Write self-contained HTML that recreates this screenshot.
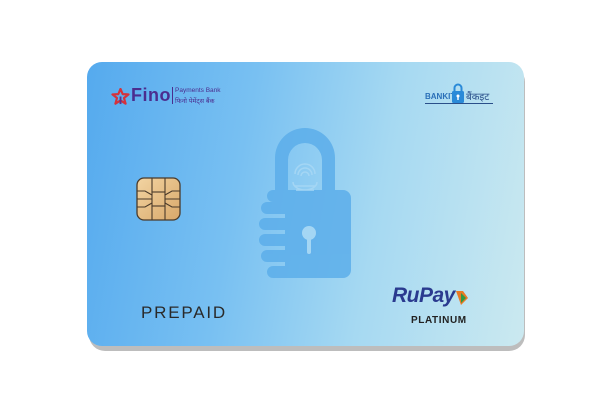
<!DOCTYPE html>
<html><head><style>
body{margin:0;width:612px;height:408px;background:#fff;position:relative;overflow:hidden;font-family:"Liberation Sans",sans-serif}
.sh{position:absolute;left:89px;top:66px;width:436px;height:285px;border-radius:16px;background:#bdbdbd}
.card{position:absolute;left:87px;top:62px;width:437px;height:284px;border-radius:15px;background:linear-gradient(100deg,#55aaee 0%,#78c0f2 35%,#a6d9f2 65%,#cbe9f0 100%)}
.t{position:absolute;white-space:nowrap}
</style></head><body>
<div class="sh"></div>
<div class="card"></div>
<svg class="t" style="left:111px;top:88px" width="19" height="17" viewBox="0 0 20 18"><path d="M10 1 L12.3 6.5 L18.5 6.8 L13.7 10.6 L15.4 16.6 L10 13.2 L4.6 16.6 L6.3 10.6 L1.5 6.8 L7.7 6.5Z" fill="none" stroke="#d4323c" stroke-width="2.3" stroke-linejoin="round"/><path d="M10 9 L10 17" stroke="#5a3290" stroke-width="2"/></svg>
<div class="t" style="left:131px;top:85px;font-size:18px;font-weight:bold;color:#4b2d8f;letter-spacing:0.5px">Fino</div>
<div class="t" style="left:172px;top:87px;width:1px;height:17px;background:#4b2d8f"></div>
<div class="t" style="left:175px;top:87px;font-size:6.5px;color:#4b2d8f">Payments Bank</div>
<div class="t" style="left:175px;top:96px;font-size:6.5px;color:#4b2d8f;font-family:'Liberation Sans','Noto Sans CJK SC',sans-serif">फिनो पेमेंट्स बैंक</div>
<div class="t" style="left:425px;top:92px;font-size:8px;font-weight:bold;color:#2a6fb8">BANKIT</div>
<svg class="t" style="left:451px;top:82px" width="14" height="22" viewBox="0 0 14 22"><path d="M3.5 10 V6 a3.5 3.5 0 0 1 7 0 V10" fill="none" stroke="#2a8ad8" stroke-width="2"/><rect x="1" y="9" width="12" height="12" rx="1.5" fill="#2a8ad8"/><circle cx="7" cy="14" r="1.5" fill="#fff"/><rect x="6.3" y="14" width="1.4" height="4" fill="#fff"/></svg>
<div class="t" style="left:466px;top:89px;font-size:10px;color:#2a4f8a">बैंकइट</div>
<div class="t" style="left:425px;top:103px;width:68px;height:1px;background:#2a4f8a"></div>
<svg class="t" style="left:136px;top:177px" width="45" height="44" viewBox="0 0 45 44"><defs><linearGradient id="g" x1="0" y1="0" x2="1" y2="1"><stop offset="0" stop-color="#f2d4a2"/><stop offset="1" stop-color="#d9a86a"/></linearGradient></defs><rect x="1" y="1" width="43" height="42" rx="7" fill="url(#g)" stroke="#4a3a2a" stroke-width="1.3"/><g fill="none" stroke="#4a3a2a" stroke-width="1.1"><rect x="16" y="15" width="13" height="14"/><path d="M1 14 H9 L16 18 M1 30 H9 L16 26 M44 14 H36 L29 18 M44 30 H36 L29 26 M16 1 V15 M29 1 V15 M16 43 V29 M29 43 V29 M1 22 H16 M29 22 H44"/></g></svg>
<svg class="t" style="left:255px;top:128px" width="100" height="155" viewBox="0 0 100 155"><g fill="#5caeea" opacity="0.85"><path d="M20 65 V30 a30 30 0 0 1 60 0 V65 H67 V32 a17 17 0 0 0 -34 0 V65Z"/><path d="M18 62 H88 a8 8 0 0 1 8 8 V142 a8 8 0 0 1 -8 8 H18 a6 6 0 0 1 0 -12 H30 V134 H12 a6 6 0 0 1 0 -12 H30 V118 H10 a6 6 0 0 1 0 -12 H30 V102 H10 a6 6 0 0 1 0 -12 H30 V86 H12 a6 6 0 0 1 0 -12 H18 a6 6 0 0 1 0 -12Z"/></g><circle cx="54" cy="105" r="7" fill="#a4d6f4"/><rect x="52" y="106" width="4" height="20" rx="2" fill="#a4d6f4"/><g fill="none" stroke="#a4d6f4" stroke-width="1.5"><path d="M40 46 a10 10 0 0 1 20 0 M43 47 a7 7 0 0 1 14 0 M46 48 a4 4 0 0 1 8 0 M38 54 a12 8 0 0 0 24 0 M40 58 h20 M41 62 h18"/></g></svg>
<div class="t" style="left:141px;top:303px;font-size:17px;color:#2a2a2a;letter-spacing:1.8px">PREPAID</div>
<div class="t" style="left:392px;top:284px;font-size:21px;font-weight:bold;font-style:italic;color:#2a3a8f;letter-spacing:-0.5px">RuPay</div>
<svg class="t" style="left:455px;top:290px" width="14" height="16" viewBox="0 0 14 16"><path d="M1 1 L8 1 L13 8 L6 15 Z" fill="#e97a25"/><path d="M6 3 L11 8 L6 13 Z" fill="#2e9a44"/></svg>
<div class="t" style="left:411px;top:315px;font-size:10px;font-weight:bold;color:#222;letter-spacing:0.6px">PLATINUM</div>
</body></html>
